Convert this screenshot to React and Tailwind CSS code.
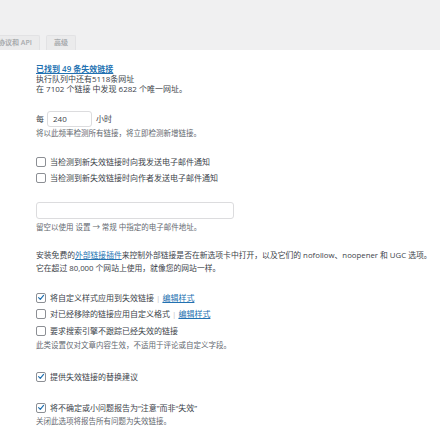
import React from "react";

const font = { fontFamily: '"Open Sans","Noto Sans CJK SC",sans-serif' };

function Box({ checked }) {
  return (
    <span className="flex h-[10px] w-[10px] shrink-0 items-center justify-center rounded-[2px] border border-[#8c8f94] bg-white">
      {checked && (
        <svg viewBox="0 0 10 10" className="h-[9px] w-[9px]">
          <path d="M2 5.2 L4.1 7.3 L8.2 2.4" fill="none" stroke="#2271b1" strokeWidth="1.5" strokeLinecap="round" strokeLinejoin="round" />
        </svg>
      )}
    </span>
  );
}

function Row({ checked, children, h = "h-[16px]" }) {
  return (
    <div className={`flex ${h} items-center gap-[4px] whitespace-nowrap`}>
      <Box checked={checked} />
      <span className="leading-[10px]">{children}</span>
    </div>
  );
}

function EditLink() {
  return (
    <>
      <span className="mx-[2px] text-[#c3c4c7]">|</span>
      <span className="text-[#2271b1] underline">编辑样式</span>
    </>
  );
}

export default function App() {
  return (
    <div className="h-[440px] w-[440px] overflow-hidden bg-white text-[8px] text-[#3c434a]" style={font}>
      <div className="flex h-[50px] items-end bg-[#f0f0f1]">
        <div className="-ml-[10px] flex gap-[6px]">
          <div className="flex h-[15px] items-center rounded-t-[2px] border border-b-0 border-[#e2e2e4] bg-[#ebebec] pl-[7px] pr-[7px] text-[7px] font-semibold text-[#a7aaad]">
            协议和 API
          </div>
          <div className="flex h-[15px] items-center rounded-t-[2px] border border-b-0 border-[#e2e2e4] bg-[#ebebec] px-[7px] text-[7px] font-semibold text-[#a7aaad]">
            高级
          </div>
        </div>
      </div>

      <div className="pl-[36px] pt-[14px]">
        <div className="leading-[10px]">
          <div className="font-semibold text-[#2271b1] underline">已找到 49 条失效链接</div>
          <div>执行队列中还有5118条网址</div>
          <div>在 7102 个链接 中发现 6282 个唯一网址。</div>
        </div>

        <div className="mt-[17px] flex h-[16px] items-center">
          <span>每</span>
          <div className="ml-[3px] flex h-[16px] w-[45px] items-center rounded-[3px] border border-[#dcdcde] bg-white pl-[5px] text-[#3c434a]">
            240
          </div>
          <span className="ml-[4px]">小时</span>
        </div>
        <div className="mt-[1px] text-[7.5px] leading-[10px] text-[#646970]">将以此频率检测所有链接，将立即检测新增链接。</div>

        <div className="mt-[16px]">
          <Row>当检测到新失效链接时向我发送电子邮件通知</Row>
          <Row>当检测到新失效链接时向作者发送电子邮件通知</Row>
        </div>

        <div className="mt-[16px] h-[17px] w-[198px] rounded-[3px] border border-[#dcdcde] bg-white" />
        <div className="mt-[3px] text-[7.5px] leading-[10px] text-[#646970]">留空以使用 设置 → 常规 中指定的电子邮件地址。</div>

        <div className="mt-[17px] w-[400px] whitespace-nowrap text-[7.8px] leading-[12.7px]">
          安装免费的<span className="text-[#2271b1] underline">外部链接插件</span>来控制外部链接是否在新选项卡中打开，以及它们的 nofollow、noopener 和 UGC 选项。
          <br />
          它在超过 80,000 个网站上使用，就像您的网站一样。
        </div>

        <div className="mt-[15px]">
          <Row checked h="h-[16.6px]">将自定义样式应用到失效链接<EditLink /></Row>
          <Row h="h-[16.6px]">对已经移除的链接应用自定义格式<EditLink /></Row>
          <Row h="h-[16.6px]">要求搜索引擎不跟踪已经失效的链接</Row>
        </div>
        <div className="mt-[1px] text-[7.5px] leading-[10px] text-[#646970]">此类设置仅对文章内容生效，不适用于评论或自定义字段。</div>

        <div className="mt-[18.5px]">
          <Row checked h="h-[16.6px]">提供失效链接的替换建议</Row>
        </div>
        <div className="mt-[14px]">
          <Row checked h="h-[16.6px]">将不确定或小问题报告为“注意”而非“失效”</Row>
        </div>
        <div className="text-[7.5px] leading-[10px] text-[#646970]">关闭此选项将报告所有问题为失效链接。</div>
      </div>
    </div>
  );
}
